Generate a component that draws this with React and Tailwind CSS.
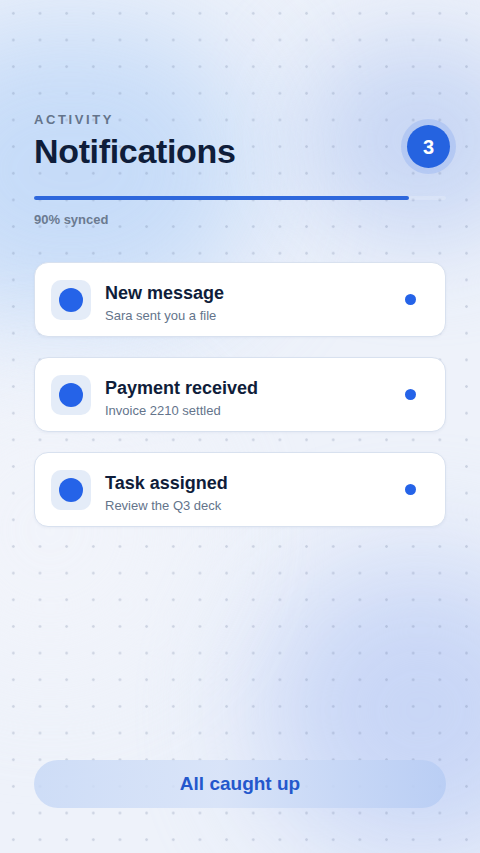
import React from "react";

const items = [
  { title: "New message", sub: "Sara sent you a file" },
  { title: "Payment received", sub: "Invoice 2210 settled" },
  { title: "Task assigned", sub: "Review the Q3 deck" },
];

function NotificationCard({ title, sub }) {
  return (
    <div className="flex items-center h-[75px] rounded-[14px] bg-white border border-[#d8e1ef] pl-[16px] pr-[29px] shadow-[0_1px_3px_rgba(30,60,120,0.05)]">
      <div className="w-[40px] h-[40px] rounded-[10px] bg-[#e4ecf8] flex items-center justify-center shrink-0">
        <div className="w-[24px] h-[24px] rounded-full bg-[#2563e8]" />
      </div>
      <div className="flex flex-col ml-[14px] flex-1 pt-[6px]">
        <span className="text-[18px] leading-[22px] font-bold text-[#0f1d3a]">{title}</span>
        <span className="text-[13px] leading-[16px] mt-[4px] text-[#64748b]">{sub}</span>
      </div>
      <div className="w-[11px] h-[11px] rounded-full bg-[#2563e8]" />
    </div>
  );
}

export default function App() {
  return (
    <div
      className="relative w-[480px] h-[853px] overflow-hidden bg-[#eef2fa]"
      style={{ fontFamily: '"Liberation Sans", Arial, sans-serif' }}
    >
      {/* glows */}
      <div className="absolute left-[-120px] top-[20px] w-[380px] h-[300px] rounded-full bg-[#bcd6f8] opacity-80 blur-[60px]" />
      <div className="absolute left-[300px] top-[40px] w-[240px] h-[200px] rounded-full bg-[#c4d4f4] opacity-90 blur-[50px]" />
      <div className="absolute left-[260px] top-[560px] w-[320px] h-[300px] rounded-full bg-[#c4d3f6] opacity-90 blur-[60px]" />
      <div className="absolute left-[-100px] top-[380px] w-[300px] h-[300px] rounded-full bg-[#f3f5fb] opacity-70 blur-[60px]" />
      {/* dot grid */}
      <div className="absolute inset-0 bg-[radial-gradient(circle,rgba(100,116,150,0.24)_1px,transparent_1.6px)] bg-[size:26.667px_26.667px]" />

      <div className="relative flex flex-col h-full px-[34px] pt-[113px] pb-[45px]">
        <div className="flex items-start justify-between">
          <div className="flex flex-col">
            <span className="text-[13px] leading-[14px] font-bold tracking-[0.2em] text-[#64748b]">ACTIVITY</span>
            <span className="text-[34px] leading-[40px] mt-[4px] font-bold text-[#0f1d3a] tracking-[-0.01em]">Notifications</span>
          </div>
          <div className="mt-[12px] mr-[-4px] w-[43px] h-[43px] rounded-full bg-[#2563e0] shadow-[0_0_0_6px_rgba(37,99,235,0.14)] flex items-center justify-center text-white text-[20px] font-bold">
            3
          </div>
        </div>

        <div className="mt-[25px] h-[4px] rounded-full bg-[rgba(255,255,255,0.18)]">
          <div className="h-full w-[91%] rounded-full bg-[#2e67dc]" />
        </div>
        <span className="mt-[12px] text-[13px] leading-[16px] font-bold text-[#6b7a90]">90% synced</span>

        <div className="mt-[34px] flex flex-col gap-[20px]">
          {items.map((it) => (
            <NotificationCard key={it.title} {...it} />
          ))}
        </div>

        <div className="mt-auto h-[48px] rounded-full bg-[linear-gradient(90deg,rgba(200,217,246,0.85),rgba(214,226,248,0.85)_45%,rgba(184,205,244,0.9))] flex items-center justify-center">
          <span className="text-[19px] font-bold text-[#2458cc]">All caught up</span>
        </div>
      </div>
    </div>
  );
}
